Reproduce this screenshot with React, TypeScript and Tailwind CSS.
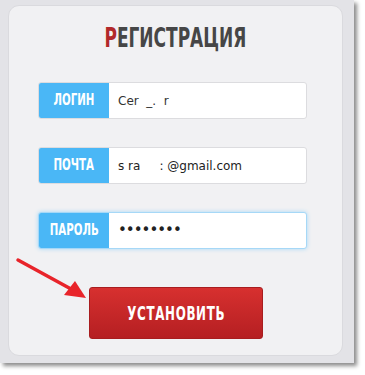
import { ReactNode } from "react";

const cond = "font-['DejaVu_Sans_Condensed','DejaVu_Sans',sans-serif] [font-stretch:condensed] font-bold";

function Field({ label, children, focused }: { label: string; children: ReactNode; focused?: boolean }) {
  return (
    <div
      className={`flex h-[37px] w-[269px] rounded-[3px] border bg-white overflow-hidden ${
        focused ? "border-[#a6d8f7] shadow-[0_0_4px_#a6d8f7]" : "border-[#dcdcdf]"
      }`}
    >
      <div className="flex w-[70px] shrink-0 items-center justify-center bg-[#4ab7f6]">
        <span className={`${cond} text-[15px] text-white inline-block scale-x-[0.76]`}>{label}</span>
      </div>
      <div className="flex flex-1 items-center pl-[9px] font-['DejaVu_Sans',sans-serif] text-[12px] text-[#222]">
        {children}
      </div>
    </div>
  );
}

export default function App() {
  return (
    <div className="relative h-[375px] w-[365px] bg-white">
      {/* framed screenshot */}
      <div className="h-[363px] w-[354px] bg-[#e3e3e7] pl-[8px] pt-[5px] shadow-[3px_3px_4px_rgba(0,0,0,0.45)]">
        <div className="flex h-[351px] w-[335px] flex-col rounded-[11px] border border-[#dadade] bg-[#f1f1f3]">
          <h1 className={`${cond} mt-[17px] self-center text-[27px] leading-[30px] text-[#464646] inline-block scale-x-[0.7]`}>
            <span className="text-[#b2282a]">Р</span>ЕГИСТРАЦИЯ
          </h1>

          <div className="ml-[29px] mt-[29px] flex flex-col gap-[28px]">
            <Field label="ЛОГИН">
              <span className="text-[#333]">Cer&nbsp;&nbsp;_.&nbsp;&nbsp;r</span>
            </Field>
            <Field label="ПОЧТА">
              <span>s&nbsp;ra&nbsp;&nbsp;&nbsp;&nbsp;&nbsp;:&nbsp;@gmail.com</span>
            </Field>
            <Field label="ПАРОЛЬ" focused>
              <span className="text-[15px] tracking-[-1px]">••••••••</span>
            </Field>
          </div>

          <button className="mt-[38px] ml-[80px] flex h-[52px] w-[174px] items-center justify-center rounded-[3px] border border-[#a81d1f] bg-gradient-to-b from-[#d7302f] to-[#b51f22]">
            <span className={`${cond} text-[20px] tracking-[1px] text-white inline-block scale-x-[0.66]`}>
              УСТАНОВИТЬ
            </span>
          </button>
        </div>
      </div>

      {/* red annotation arrow */}
      <svg className="absolute left-0 top-0" width="365" height="375" viewBox="0 0 365 375">
        <line x1="18" y1="260" x2="71" y2="289" stroke="#e8242a" strokeWidth="3.5" strokeLinecap="round" />
        <polygon points="86,298 64,295 75,281" fill="#e8242a" />
      </svg>
    </div>
  );
}
